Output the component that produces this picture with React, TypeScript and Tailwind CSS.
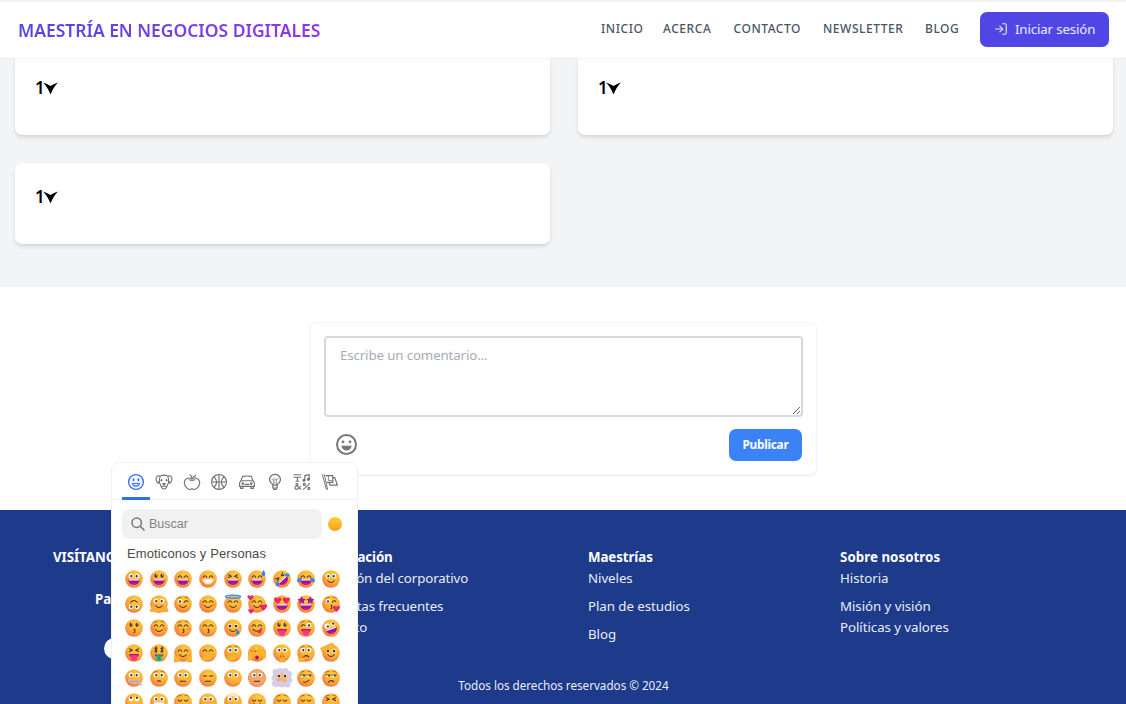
import React from "react";
import { LogIn } from "lucide-react";

const YELLOW_HAND = "#fbb62c";
const HEART = "M0 3.2C-5-.6-3.4-4 0-1.7 3.4-4 5-.6 0 3.2Z";
const STAR = "M0-5 1.6-1.7 5-1.3 2.5 1 3.2 4.6 0 2.8-3.2 4.6-2.5 1-5-1.3-1.6-1.7Z";

type EyeKind =
  | "wide" | "tall" | "arc" | "squint" | "heart" | "star" | "wink" | "closed"
  | "flat" | "dot" | "side" | "up" | "money" | "zany" | "none" | "winkwide";
type MouthKind =
  | "grin" | "teeth" | "smile" | "kiss" | "tongue" | "yum" | "flat" | "frown"
  | "smirk" | "zip" | "money" | "open" | "small" | "none";
type Extra =
  | "sweat" | "tears" | "roll" | "halo" | "hearts" | "kissheart" | "tear" | "hug"
  | "hand" | "peek" | "finger" | "think" | "salute" | "clouds" | "dotted"
  | "melt" | "brows" | "nose" | "steam" | "blush";

interface FaceSpec {
  name: string;
  eyes: EyeKind;
  mouth: MouthKind;
  extras?: Extra[];
  turn?: number;
}

const FACES: FaceSpec[] = [
  { name: "grinning", eyes: "wide", mouth: "grin" },
  { name: "smiley", eyes: "tall", mouth: "grin" },
  { name: "smile", eyes: "arc", mouth: "grin" },
  { name: "beaming", eyes: "arc", mouth: "teeth" },
  { name: "laughing", eyes: "squint", mouth: "grin" },
  { name: "sweat", eyes: "arc", mouth: "grin", extras: ["sweat"] },
  { name: "rofl", eyes: "squint", mouth: "grin", extras: ["roll"], turn: -42 },
  { name: "joy", eyes: "arc", mouth: "grin", extras: ["tears"] },
  { name: "slight", eyes: "wide", mouth: "smile" },

  { name: "upside", eyes: "wide", mouth: "smile", turn: 180 },
  { name: "melting", eyes: "wide", mouth: "smile", extras: ["melt"] },
  { name: "wink", eyes: "wink", mouth: "smile", extras: ["brows"] },
  { name: "blush", eyes: "arc", mouth: "smile", extras: ["blush"] },
  { name: "innocent", eyes: "arc", mouth: "smile", extras: ["halo"] },
  { name: "loved", eyes: "arc", mouth: "smile", extras: ["hearts"] },
  { name: "heart-eyes", eyes: "heart", mouth: "grin" },
  { name: "star-eyes", eyes: "star", mouth: "grin" },
  { name: "kiss-heart", eyes: "wink", mouth: "kiss", extras: ["kissheart", "brows"] },

  { name: "kissing", eyes: "tall", mouth: "kiss" },
  { name: "relaxed", eyes: "arc", mouth: "smile", extras: ["brows", "blush"] },
  { name: "kiss-closed", eyes: "arc", mouth: "kiss", extras: ["brows", "blush"] },
  { name: "kiss-smile", eyes: "arc", mouth: "kiss" },
  { name: "smile-tear", eyes: "dot", mouth: "smile", extras: ["tear"] },
  { name: "yum", eyes: "arc", mouth: "yum" },
  { name: "tongue", eyes: "tall", mouth: "tongue" },
  { name: "wink-tongue", eyes: "winkwide", mouth: "tongue", extras: ["brows"] },
  { name: "zany", eyes: "zany", mouth: "grin", turn: -18 },

  { name: "squint-tongue", eyes: "squint", mouth: "tongue" },
  { name: "money", eyes: "money", mouth: "money" },
  { name: "hugging", eyes: "arc", mouth: "smile", extras: ["hug"] },
  { name: "giggle", eyes: "arc", mouth: "none", extras: ["hand"] },
  { name: "gasp", eyes: "wide", mouth: "none", extras: ["hand", "brows"] },
  { name: "peeking", eyes: "closed", mouth: "open", extras: ["peek"] },
  { name: "shush", eyes: "wide", mouth: "small", extras: ["finger"] },
  { name: "thinking", eyes: "wide", mouth: "frown", extras: ["think", "brows"] },
  { name: "salute", eyes: "dot", mouth: "smile", extras: ["salute"] },

  { name: "zipper", eyes: "wide", mouth: "zip" },
  { name: "raised-brow", eyes: "wide", mouth: "small", extras: ["brows"] },
  { name: "neutral", eyes: "wide", mouth: "flat" },
  { name: "expressionless", eyes: "flat", mouth: "flat" },
  { name: "no-mouth", eyes: "wide", mouth: "none" },
  { name: "dotted", eyes: "wide", mouth: "flat", extras: ["dotted"] },
  { name: "clouds", eyes: "dot", mouth: "none", extras: ["clouds"] },
  { name: "smirk", eyes: "side", mouth: "smirk", extras: ["brows"] },
  { name: "unamused", eyes: "side", mouth: "frown", extras: ["brows"] },

  { name: "rolling", eyes: "up", mouth: "flat" },
  { name: "grimace", eyes: "wide", mouth: "teeth" },
  { name: "exhaling", eyes: "closed", mouth: "small", extras: ["brows"] },
  { name: "lying", eyes: "wide", mouth: "flat", extras: ["nose"] },
  { name: "shaking", eyes: "wide", mouth: "small", extras: ["steam"] },
  { name: "relieved", eyes: "closed", mouth: "smile" },
  { name: "pensive", eyes: "closed", mouth: "flat", extras: ["brows"] },
  { name: "sleepy", eyes: "closed", mouth: "frown", extras: ["brows"] },
  { name: "tired", eyes: "squint", mouth: "open", extras: ["brows"] },
];

const INK = "#4a2b2e";

function Eye({ kind, left }: { kind: EyeKind; left: boolean }) {
  const x = left ? 12 : 24;
  const line = { fill: "none", stroke: INK, strokeWidth: 2.1, strokeLinecap: "round" as const };
  const white = (px = x, py = 12.5, r = 4.6) => (
    <g>
      <circle cx={x} cy={12} r={r} fill="#fff" />
      <circle cx={px} cy={py} r={2.3} fill={INK} />
    </g>
  );
  switch (kind) {
    case "wide":
      return white(left ? 12.6 : 23.4);
    case "up":
      return white(x, 9.6);
    case "tall":
      return (
        <g>
          <ellipse cx={x} cy={11.5} rx={3.1} ry={4} fill={INK} />
          <circle cx={x + 0.8} cy={9.8} r={1.1} fill="#fff" />
        </g>
      );
    case "dot":
      return (
        <g>
          <circle cx={x} cy={14} r={4} fill="#fff" />
          <circle cx={x} cy={14.2} r={2.8} fill={INK} />
        </g>
      );
    case "arc":
      return <path d={`M${x - 3.6} 14.5Q${x} 8.5 ${x + 3.6} 14.5`} {...line} />;
    case "closed":
      return <path d={`M${x - 3.6} 14Q${x} 18.5 ${x + 3.6} 14`} {...line} />;
    case "flat":
      return <path d={`M${x - 3.4} 14H${x + 3.4}`} {...line} />;
    case "squint":
      return <path d={left ? "M9 9.5l5.5 2.8L9 15" : "M27 9.5l-5.5 2.8L27 15"} {...line} />;
    case "wink":
    case "winkwide":
      if (left === (kind === "wink")) return white(x, 13);
      return <path d={`M${x - 3.6} 14.5Q${x} 9.5 ${x + 3.6} 13`} {...line} />;
    case "side":
      return (
        <g>
          <path d={`M${x - 4.4} 12H${x + 4.4}A4.4 4.4 0 0 1 ${x - 4.4} 12Z`} fill="#fff" />
          <circle cx={x + 2} cy={13.4} r={1.9} fill={INK} />
          <path d={`M${x - 4.6} 12H${x + 4.6}`} {...line} strokeWidth={1.5} />
        </g>
      );
    case "zany":
      return white(x + 1, left ? 13.2 : 11, left ? 5.4 : 3.9);
    case "heart":
      return <path d={HEART} transform={`translate(${left ? 9.5 : 26.5} 10.5) scale(2.3)`} fill="#f0265c" />;
    case "star":
      return <path d={STAR} transform={`translate(${left ? 9.5 : 26.5} 10.5) scale(1.65)`} fill="#a3189e" />;
    case "money":
      return (
        <path
          d={`M${x + 2.5} 8.2C${x - 1} 6 ${x - 4} 10 ${x} 11.6 ${x + 4} 13 ${x + 1} 17 ${x - 2.6} 14.8M${x} 5.5V17.5`}
          {...line}
        />
      );
    default:
      return null;
  }
}

function Mouth({ kind }: { kind: MouthKind }) {
  const line = { fill: "none", stroke: INK, strokeWidth: 2.1, strokeLinecap: "round" as const };
  switch (kind) {
    case "grin":
      return (
        <g>
          <path d="M6.5 18.500H29.500C29.300 33.5 6.700 33.5 6.500 18.500Z" fill="#a0128f" />
          <path d="M7.200 18.500H28.800L28 20.800H8Z" fill="#fff" />
          <path d="M12.300 28.300Q18 24.500 23.700 28.300 18 31.500 12.300 28.300Z" fill="#d321a0" />
        </g>
      );
    case "teeth":
      return (
        <g>
          <path d="M7.5 18.500H28.5C28.5 31 7.5 31 7.5 18.500Z" fill="#fff" stroke="#f3c4d2" />
          <path d="M9 23H27" stroke="#e4c9e6" strokeWidth=".8" />
        </g>
      );
    case "smile":
      return <path d="M11.5 21.5Q18 28.5 24.5 21.5" {...line} />;
    case "kiss":
      return <path d="M18 20Q21.5 20.8 18.7 23.3 21.5 25.5 18 27.5" {...line} />;
    case "tongue":
      return (
        <g>
          <path d="M8 20H28Q27 28 18 28 9 28 8 20Z" fill="#b01a7c" />
          <path d="M11.5 22.5H24.5V27Q24 33.5 18 33.5 12 33.5 11.5 27Z" fill="#fb3586" />
        </g>
      );
    case "yum":
      return (
        <g>
          <path d="M10 20.5Q18 29 27 19" {...line} />
          <path d="M18 24Q24 23 26.5 20C30 25 25 31 20 28Z" fill="#ef2869" />
        </g>
      );
    case "flat":
      return <path d="M12.5 24.5H23.5" {...line} />;
    case "frown":
      return <path d="M12.5 26.5Q18 20.5 23.5 25.5" {...line} />;
    case "smirk":
      return <path d="M13 26Q20 28 24 22" {...line} />;
    case "small":
      return <path d="M14.8 24.5Q18 23 21.2 24.5" {...line} />;
    case "open":
      return <ellipse cx={18} cy={27} rx={3.6} ry={4.2} fill="#b0144d" />;
    case "zip":
      return (
        <g fill="none" stroke="#cbb8ea" strokeLinecap="round">
          <path d="M8 23Q18 29 28 25" strokeWidth={4.4} />
          <path d="M10 24.4 27 26" stroke="#8d75b5" strokeDasharray="1.4 1.8" />
          <path d="M29 27 32 32" strokeWidth={4} />
        </g>
      );
    case "money":
      return (
        <g>
          <path d="M9 21H27Q26 27 18 27 10 27 9 21Z" fill="#5d4a8d" />
          <path d="M12.5 23H23.5V34H12.5Z" fill="#20bd7e" />
          <path d="M18 25V32" stroke="#0e8153" strokeWidth={2} />
        </g>
      );
    default:
      return null;
  }
}

function Addition({ kind }: { kind: Extra }) {
  const heart = (x: number, y: number, s: number) => (
    <path d={HEART} transform={`translate(${x} ${y}) scale(${s})`} fill="#ee2860" />
  );
  switch (kind) {
    case "sweat":
      return <path d="M31 0C26 7 26.5 12 31 12S36 7 31 0Z" fill="#3b82f0" />;
    case "tears":
      return (
        <g fill="#3684f1">
          <path d="M10 16C3 15-2 20 1 23.5 5 26 9 22 10 16Z" />
          <path d="M26 16C33 15 38 20 35 23.5 31 26 27 22 26 16Z" />
        </g>
      );
    case "roll":
      return (
        <g fill="#3684f1">
          <path d="M9 15C2 15-1 20 2 23 6 25 9 21 9 15Z" />
          <path d="M27 15C34 15 37 20 34 23 30 25 27 21 27 15Z" />
        </g>
      );
    case "halo":
      return <ellipse cx={18} cy={3.5} rx={15} ry={3} fill="none" stroke="#4b8fea" strokeWidth={3.2} />;
    case "hearts":
      return <g>{heart(5, 5, 1.9)}{heart(31, 24, 2.3)}{heart(6, 32, 1.7)}</g>;
    case "kissheart":
      return heart(29, 27, 2.2);
    case "tear":
      return <path d="M27 21C23 27 24 31 27.5 31S32 27 27 21Z" fill="#2783eb" />;
    case "hug":
      return (
        <g fill={YELLOW_HAND} stroke="#ee8b2f" strokeWidth=".8">
          <path d="M1 24 3 21 6 25 8 22 12 27Q14 34 8 36H0Z" />
          <path d="M35 24 33 21 30 25 28 22 24 27Q22 34 28 36H36Z" />
        </g>
      );
    case "hand":
      return (
        <path
          d="M8 24 19 19Q23 18 22 21L27 20Q30 22 26 25L27 28Q19 36 9 34L4 29Z"
          fill={YELLOW_HAND} stroke="#ee8b2f" strokeWidth=".9"
        />
      );
    case "peek":
      return (
        <g fill={YELLOW_HAND} stroke="#ee8b2f" strokeWidth=".9">
          <path d="M1 33V17L4 11 8 17 12 9 14 15 10 31Z" />
          <path d="M35 29V15L31 9 27 14 23 7 19 17 25 23Z" />
        </g>
      );
    case "finger":
      return (
        <path d="M16 20Q18 17 20 20V29L26 31 23 36H14L11 30 16 28Z" fill={YELLOW_HAND} stroke="#df812a" strokeWidth="1.2" />
      );
    case "think":
      return (
        <path d="M2 25Q5 21 7 28L17 26Q20 29 15 31L13 35H4Z" fill={YELLOW_HAND} stroke="#e78a27" />
      );
    case "salute":
      return <path d="M-3 8 20-2Q25-1 23 3L27 7 9 12 0 16Z" fill={YELLOW_HAND} stroke="#ee9a2b" />;
    case "clouds":
      return (
        <g fill="#d4cee9">
          <circle cx="5" cy="6" r="6" /><circle cx="14" cy="4" r="6" /><circle cx="25" cy="4" r="6" />
          <circle cx="32" cy="10" r="6" /><circle cx="3" cy="18" r="6" /><circle cx="33" cy="22" r="6" />
          <circle cx="5" cy="29" r="7" /><circle cx="17" cy="30" r="7" /><circle cx="29" cy="31" r="6" />
        </g>
      );
    case "dotted":
      return (
        <g>
          <circle cx="18" cy="18" r="17" fill="#f9a176" opacity=".75" />
          <circle cx="18" cy="18" r="17" fill="none" stroke="#e36e5c" strokeWidth="2" strokeDasharray="2.5 3" />
        </g>
      );
    case "melt":
      return <path d="M2 22C5 27 0 28-1 31 1 36 10 33 15 36 19 33 27 36 35 34 40 29 33 29 34 22Z" fill="#fda940" />;
    case "brows":
      return <path d="M7 7Q10 3.5 14 5M22 4.5Q26 3 29 6.5" fill="none" stroke="#9b5b27" strokeWidth="1.6" strokeLinecap="round" />;
    case "nose":
      return <path d="M18 17H33Q37 20 32 23H18Z" fill="#fbb53b" stroke="#e88927" strokeWidth=".8" />;
    case "steam":
      return <path d="M6 6Q18-4 30 6L27 9Q18 3 9 9Z" fill="#fff" opacity=".7" />;
    case "blush":
      return (
        <g fill="#fb7354" opacity=".55">
          <ellipse cx="7" cy="20" rx="4" ry="3" /><ellipse cx="29" cy="20" rx="4" ry="3" />
        </g>
      );
    default:
      return null;
  }
}

const BEHIND: Extra[] = ["melt", "dotted", "blush"];

function Face({ spec }: { spec: FaceSpec }) {
  const extras = spec.extras ?? [];
  const clouds = extras.includes("clouds");
  const turn = spec.turn ?? 0;
  return (
    <svg viewBox="0 0 36 36" className="size-[18px] overflow-visible">
      <circle cx="18" cy="18" r="17.6" fill="url(#skin)" />
      {extras.filter((e) => BEHIND.includes(e)).map((e) => <Addition key={e} kind={e} />)}
      {clouds && <Addition kind="clouds" />}
      {clouds && <ellipse cx="18" cy="17" rx="10" ry="8" fill="#f7b27a" />}
      <g transform={turn ? `rotate(${turn} 18 18)` : undefined}>
        <Eye kind={spec.eyes} left />
        <Eye kind={spec.eyes} left={false} />
        <Mouth kind={spec.mouth} />
        {extras.filter((e) => !BEHIND.includes(e) && e !== "clouds").map((e) => <Addition key={e} kind={e} />)}
      </g>
    </svg>
  );
}

const CATEGORY_ICONS: React.ReactNode[] = [
  <g key="people">
    <circle cx="10" cy="10" r="9.200" strokeWidth="1.800" />
    <path d="M7 6.500V7.800M13 6.500V7.800" strokeWidth="2.400" />
    <path d="M5.500 11.500H14.500Q14 15.300 10 15.300 6 15.300 5.500 11.500Z" />
    <path d="M8.500 12V15M11.500 12V15" strokeWidth="1" />
  </g>,
  <g key="animals" strokeWidth="1.300">
    <path d="M5 3Q10 -.2 15 3L16 9.500 14.300 14Q13 18.800 10 18.800 7 18.800 5.700 14L4 9.500Z" />
    <path d="M5 2.500Q1 .8 0 6 .5 10.500 3 11.500L5 8M15 2.500Q19 .8 20 6 19.500 10.500 17 11.500L15 8" />
    <path d="M7 7.200V8.500M13 7.200V8.500" strokeWidth="2" />
    <path d="M8.300 11.800H11.700L10 13.500Z" fill="currentColor" />
    <path d="M10 13.500V15M7.200 15Q8.500 16.500 10 15 11.500 16.500 12.800 15" />
  </g>,
  <g key="food">
    <path d="M10 6C5 3.500 .3 6 .3 11 1 16 4.500 19.300 7.500 19.300Q10 18 12.500 19.300C15.500 19.300 19 16 19.700 11 19.700 6 15 3.500 10 6Z" />
    <path d="M10 6.500Q10.300 3 7.500 1M10.500 3.800Q13.500 3.800 14.500 1.500M6.500 7Q10 9.300 13.500 7" />
  </g>,
  <g key="sports">
    <circle cx="10" cy="10" r="9.300" />
    <path d="M10 1V19M1 10H19M4 3.500Q10 10 4 16.500M16 3.500Q10 10 16 16.500" />
  </g>,
  <g key="travel">
    <path d="M2.500 8.500 4.500 3Q10 2 15.500 3L17.500 8.500M2.500 8.500H17.500Q19.300 10 19.300 12V15.500H.7V12Q.7 10 2.500 8.500ZM2 15.500V18H5V15.500M15 15.500V18H18V15.500M7.500 13H12.500" />
    <circle cx="4.700" cy="12" r="1.100" /><circle cx="15.300" cy="12" r="1.100" />
  </g>,
  <g key="objects">
    <path d="M7.300 14Q7 12.500 4.800 11C.8 6 4.800 .5 10 .5S19.200 6 15.200 11Q13 12.500 12.700 14ZM7.300 14V17.500H12.700V14M8.500 17.500V19.300H11.500V17.500" />
    <path d="M6 6.500Q7 8.500 8 6.500 9 5 10 6.500 11 8.500 12 6.500 13 5 14 6.500M8.500 14V8M11.500 14V8" strokeWidth="1.100" />
  </g>,
  <g key="symbols">
    <path d="M0 1H8.500M0 4H8.500M4.200 4V9M2.500 9H6M13.500 7.500V2L19 .8V6.500" />
    <circle cx="12.500" cy="7.700" r="1.200" fill="currentColor" /><circle cx="18" cy="6.700" r="1.200" fill="currentColor" />
    <path d="M8.500 19 2.500 13.500Q2 11.800 4.200 11.800 6.200 12.300 4.200 14C.3 16 .3 19 3.500 19Q6.500 19 7.800 15.500M12 19 19.500 12" />
    <circle cx="13" cy="13" r="1.300" /><circle cx="18.500" cy="18" r="1.300" />
  </g>,
  <g key="flags" strokeWidth="1.500">
    <path d="M.5 .8 5.500 19.200M3 .8 7 19.200" strokeWidth="1.200" />
    <path d="M5 2H13.500V10.500H6.500M13.500 4.500H16L19.300 14H10L9 10.500" />
    <path d="M8 3V8H13" strokeWidth="1" />
  </g>,
];

function CategoryTabs() {
  return (
    <div className="flex h-[37px] border-b border-[#efefef] pl-[10px]">
      {CATEGORY_ICONS.map((icon, i) => (
        <button
          key={i}
          className={
            i === 0
              ? "flex h-[37px] w-[28px] items-center justify-center border-b-[3px] border-[#2f6fed] pt-[3px] text-[#3874ee]"
              : "flex h-[37px] w-[27.7px] items-center justify-center border-b-[3px] border-transparent pt-[3px] text-[#707070]"
          }
        >
          <svg viewBox="0 0 20 20" className="size-4 overflow-visible" fill="none" stroke="currentColor" strokeWidth="1.4" strokeLinecap="round" strokeLinejoin="round">
            {icon}
          </svg>
        </button>
      ))}
    </div>
  );
}

function EmojiPicker() {
  return (
    <aside className="absolute left-[111px] top-[462px] z-20 h-[260px] w-[247px] overflow-hidden rounded-t-lg border border-[#f1f1f1] bg-white font-['Liberation_Sans',sans-serif]">
      <CategoryTabs />
      <div className="flex items-center pl-[10px] pt-[9px]">
        <div className="flex h-[30px] w-[200px] items-center rounded-lg bg-[#f1f1f1] pl-[9px]">
          <svg viewBox="0 0 14 14" className="size-[14px]" fill="none" stroke="#777" strokeWidth="1.5" strokeLinecap="round">
            <circle cx="5.700" cy="5.700" r="4.700" />
            <path d="M9.200 9.200 13 13" />
          </svg>
          <span className="ml-1 text-[12.5px] text-[#828282]">Buscar</span>
        </div>
        <span className="ml-[6px] size-[14px] rounded-full bg-linear-to-b from-[#ffce38] to-[#f99f18]" />
      </div>
      <h3 className="h-[28px] pl-[15px] text-[13px] leading-[30px] tracking-[0.12px] text-[#4b4b4b]">Emoticonos y Personas</h3>
      <div className="grid grid-cols-[repeat(9,24.6px)] auto-rows-[24.6px] pl-[10px]">
        {FACES.map((spec) => (
          <button key={spec.name} className="flex items-center justify-center">
            <Face spec={spec} />
          </button>
        ))}
      </div>
      <svg className="absolute size-0">
        <defs>
          <radialGradient id="skin" cx=".6" cy=".3" r=".78">
            <stop offset="0" stopColor="#ffcd3e" />
            <stop offset=".55" stopColor="#fcae35" />
            <stop offset="1" stopColor="#ef6a42" />
          </radialGradient>
        </defs>
      </svg>
    </aside>
  );
}

function Header() {
  const links = [
    ["INICIO", "w-[62px]"],
    ["ACERCA", "w-[70.5px]"],
    ["CONTACTO", "w-[89.5px]"],
    ["NEWSLETTER", "w-[102px]"],
    ["BLOG", "w-[55px]"],
  ];
  return (
    <header className="z-10 flex h-[58px] shrink-0 items-center border-t-2 border-[#f3f4f6] bg-white pb-[2px] pl-[18px] pr-[17px] shadow-[0_1px_1px_rgba(0,0,0,0.03)]">
      <h1 className="bg-linear-to-r from-[#4f46e5] to-[#9333ea] bg-clip-text pt-[2px] text-[17.5px] font-semibold tracking-[-0.03px] whitespace-nowrap text-transparent">
        MAESTRÍA EN NEGOCIOS DIGITALES
      </h1>
      <nav className="ml-auto flex items-center text-[12px] font-medium tracking-[0.55px] text-[#4b5563]">
        {links.map(([label, width]) => (
          <a key={label} className={`${width} whitespace-nowrap`}>{label}</a>
        ))}
      </nav>
      <button className="flex h-[35px] w-[129px] items-center rounded-[7px] bg-[#4f46e5] pl-[14px] text-[13.3px] whitespace-nowrap text-white/90">
        <LogIn className="mr-[7px] size-[14px]" strokeWidth={1.8} />
        <span className="pt-px tracking-[-0.15px]">Iniciar sesión</span>
      </button>
    </header>
  );
}

function CountCard({ top }: { top?: boolean }) {
  return (
    <article
      className={
        top
          ? "h-[77px] rounded-b-[7px] bg-white pl-[20px] pt-[18px] shadow-[0_3px_5px_-1px_rgba(0,0,0,0.12),0_1px_3px_rgba(0,0,0,0.05)]"
          : "h-[81px] rounded-[7px] bg-white pl-[20px] pt-[22px] shadow-[0_3px_5px_-1px_rgba(0,0,0,0.12),0_1px_3px_rgba(0,0,0,0.05)]"
      }
    >
      <div className="flex h-[24px] items-center text-[17px] font-semibold text-black">
        <span className="w-[8px]">1</span>
        <svg viewBox="0 0 15 13" className="h-[13px] w-[15px]">
          <path d="M0 .5Q4 1.500 7.500 4 11 1.500 15 .5 10.500 5 7.500 12.500 4.500 5 0 .5Z" />
        </svg>
      </div>
    </article>
  );
}

function CommentForm() {
  return (
    <section className="flex h-[223px] shrink-0 justify-center bg-white pt-[35px]">
      <div className="h-[153px] w-[507px] rounded-[7px] border border-[#f5f5f6] bg-white px-[13.5px] pt-[13px] shadow-[0_1px_2px_rgba(0,0,0,0.07)]">
        <textarea
          placeholder="Escribe un comentario..."
          className="block h-[81px] w-[478.500px] rounded-[4px] border-2 border-[#d4d9df] px-[14px] py-[7px] text-[13.3px] leading-[20px] tracking-[-0.13px] placeholder:text-[#a5abb7]"
        />
        <div className="mt-3 flex h-[32px] items-center justify-between pl-[12px]">
          <svg viewBox="0 0 21 21" className="-mt-px size-[21px]">
            <circle cx="10.500" cy="10.500" r="9.500" fill="none" stroke="#777" strokeWidth="2" />
            <circle cx="7" cy="7.800" r="1.400" fill="#777" />
            <circle cx="14" cy="7.800" r="1.400" fill="#777" />
            <path d="M5.200 11.800H15.800Q14.500 16.500 10.500 16.500 6.500 16.500 5.200 11.800Z" fill="#777" />
          </svg>
          <button className="h-[32px] w-[73px] rounded-[7px] bg-[#3b82f6] text-[11.800px] font-bold tracking-[-0.25px] text-white">Publicar</button>
        </div>
      </div>
    </section>
  );
}

function Footer() {
  return (
    <footer className="h-[194px] shrink-0 bg-[#1e3a8a] pt-[36.5px] text-[13.3px] leading-[21px] tracking-[-0.06px] text-[#e9edf6]">
      <div className="flex h-[128px]">
        <div className="flex w-[260px] flex-col pl-[53px]">
          <h4 className="font-bold text-white">VISÍTANOS</h4>
          <p className="mt-[21px] pl-[42px] font-bold text-white">Parque</p>
          <span className="ml-[51px] mt-[28px] flex size-[21px] items-center justify-center rounded-full bg-white text-[11px] font-bold text-[#1e3a8a]">f</span>
        </div>
        <div className="w-[328px] pl-[52px] tracking-[-0.12px]">
          <h4 className="font-bold text-white">Información</h4>
          <p>Ubicación del corporativo</p>
          <p className="mt-[7px]">Preguntas frecuentes</p>
          <p>Contacto</p>
        </div>
        <div className="w-[252px]">
          <h4 className="font-bold tracking-[-0.08px] text-white">Maestrías</h4>
          <p>Niveles</p>
          <p className="mt-[7px]">Plan de estudios</p>
          <p className="mt-[7px]">Blog</p>
        </div>
        <div>
          <h4 className="font-bold tracking-[0.05px] text-white">Sobre nosotros</h4>
          <p>Historia</p>
          <p className="mt-[7px]">Misión y visión</p>
          <p>Políticas y valores</p>
        </div>
      </div>
      <p className="pl-[1px] text-center text-[11.7px] tracking-[-0.02px]">Todos los derechos reservados © 2024</p>
    </footer>
  );
}

export default function App() {
  return (
    <div className="relative flex h-[704px] w-[1126px] flex-col overflow-hidden bg-white font-['Noto_Sans',sans-serif]">
      <Header />
      <main className="grid h-[229px] shrink-0 grid-cols-[535px_535px] content-start gap-7 bg-[#f3f4f6] pl-[15px]">
        <CountCard top />
        <CountCard top />
        <CountCard />
      </main>
      <CommentForm />
      <Footer />
      <EmojiPicker />
    </div>
  );
}
